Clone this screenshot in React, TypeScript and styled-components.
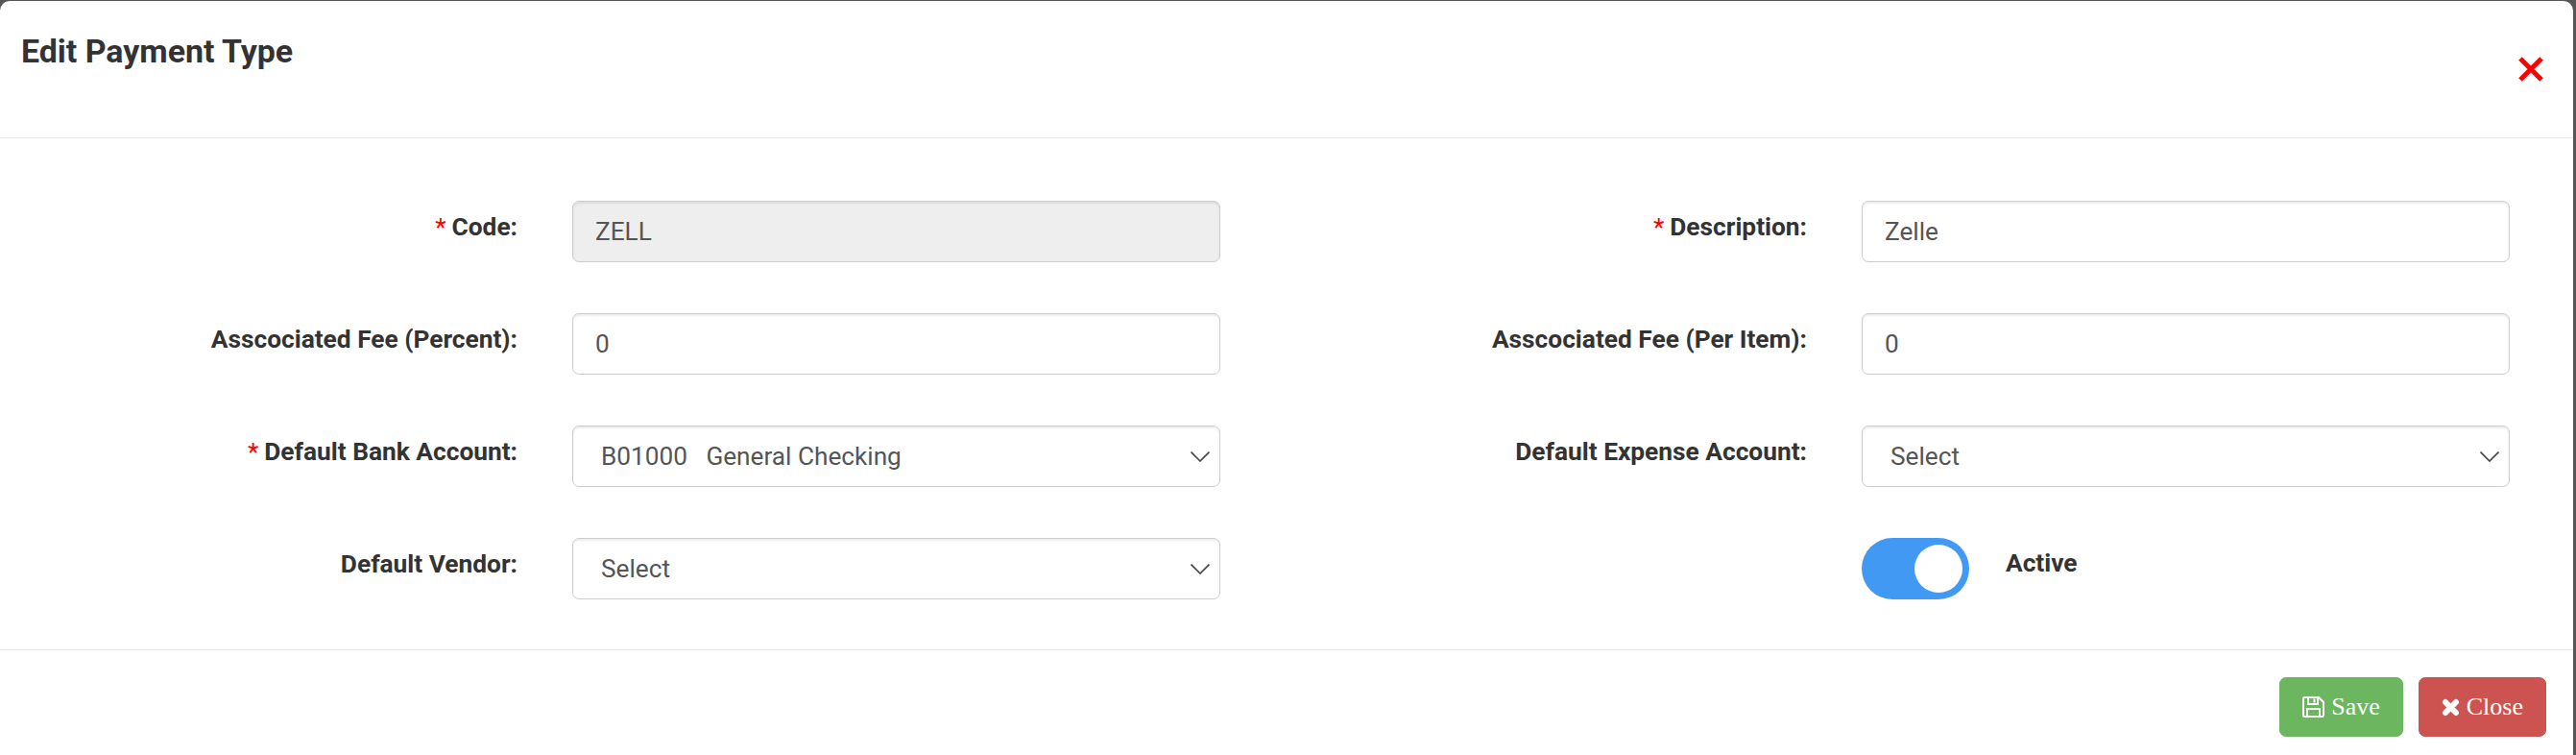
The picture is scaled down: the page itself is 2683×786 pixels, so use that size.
import React from 'react';
import styled, { createGlobalStyle } from 'styled-components';

const GlobalStyle = createGlobalStyle`
  html, body {
    margin: 0;
    padding: 0;
    height: 100%;
    background: #565656;
    overflow: hidden;
  }
  body {
    font-family: Roboto, "Liberation Sans", sans-serif;
    color: #333;
    padding-top: 1px;
    box-sizing: border-box;
  }
`;

const Modal = styled.div`
  box-sizing: border-box;
  width: 2680px;
  height: 785px;
  background: #fff;
  border-radius: 10px 10px 0 0;
  display: flex;
  flex-direction: column;
`;

const Header = styled.div`
  box-sizing: border-box;
  height: 143px;
  border-bottom: 1px solid #e5e5e5;
  padding: 0 31px 0 22px;
  display: flex;
  justify-content: space-between;
`;

const Title = styled.h4`
  margin: 33px 0 0;
  font-size: 33.9px;
  line-height: 40px;
  font-weight: 700;
  color: #333;
`;

const Dismiss = styled.button`
  border: 0;
  background: none;
  padding: 0;
  margin-top: 58px;
  width: 26px;
  height: 26px;
  color: #f00;
  display: block;
`;

const Form = styled.div`
  box-sizing: border-box;
  height: 533px;
  padding-top: 65px;
  border-bottom: 1px solid #e5e5e5;
  display: grid;
  grid-template-columns: 1271px 1343px;
  grid-auto-rows: 64px;
  row-gap: 53px;
`;

const Field = styled.div`
  display: grid;
  grid-template-columns: 1fr 675px;
  column-gap: 57px;
`;

const Label = styled.label`
  text-align: right;
  font-size: 26.3px;
  font-weight: 700;
  line-height: 28px;
  padding-top: 13px;
  color: #333;
`;

const Required = styled.span`
  color: #f00;
  font-weight: 400;
  margin-right: 6px;
`;

const Input = styled.input<{ $locked?: boolean }>`
  box-sizing: border-box;
  width: 100%;
  height: 64px;
  padding: 0 23px;
  font-family: inherit;
  font-size: 26.2px;
  color: #555;
  background: ${(props) => (props.$locked ? '#eee' : '#fff')};
  border: 1px solid #ccc;
  border-radius: 7px;
  box-shadow: inset 0 2px 2px rgba(0, 0, 0, 0.075);
  outline: none;
`;

const SelectWrap = styled.div`
  position: relative;
  height: 64px;
`;

const Select = styled.select`
  box-sizing: border-box;
  width: 100%;
  height: 64px;
  padding: 0 60px 0 29px;
  appearance: none;
  font-family: inherit;
  font-size: 26.2px;
  color: #555;
  background: #fff;
  border: 1px solid #ccc;
  border-radius: 7px;
  box-shadow: inset 0 2px 2px rgba(0, 0, 0, 0.075);
  outline: none;
`;

const Chevron = styled.svg`
  position: absolute;
  right: 11px;
  top: 27px;
  width: 20px;
  height: 11px;
  pointer-events: none;
`;

const ToggleRow = styled.div`
  display: flex;
  align-items: flex-start;
  gap: 38px;
`;

const Track = styled.div`
  box-sizing: border-box;
  width: 112px;
  height: 64px;
  border-radius: 32px;
  background: #4299f3;
  padding: 7px 7px 7px 55px;
`;

const Knob = styled.div`
  width: 50px;
  height: 50px;
  border-radius: 50%;
  background: #fff;
`;

const ToggleLabel = styled.span`
  font-size: 26.3px;
  font-weight: 700;
  line-height: 28px;
  padding-top: 12px;
  color: #333;
`;

const Footer = styled.div`
  box-sizing: border-box;
  padding: 28px 28px 0 0;
  display: flex;
  justify-content: flex-end;
  gap: 16px;
`;

const Button = styled.button<{ $tone: string }>`
  box-sizing: border-box;
  height: 62px;
  padding: 0 23px;
  display: flex;
  align-items: center;
  gap: 7px;
  font-family: "Liberation Serif", serif;
  font-size: 26px;
  color: #fff;
  background: ${(props) => props.$tone};
  border: 1px solid ${(props) => props.$tone};
  border-radius: 7px;
`;

const ChevronIcon = () => (
  <Chevron viewBox="0 0 20 11">
    <path d="M0.5 0.5 L10 10 L19.5 0.5" fill="none" stroke="#444" strokeWidth="1.6" />
  </Chevron>
);

const FloppyIcon = () => (
  <svg viewBox="0 0 23 22" width="23" height="22" fill="none" stroke="currentColor" strokeWidth="2">
    <path d="M2.5 1 H17 L22 6 V19.5 Q22 21 20.5 21 H2.5 Q1 21 1 19.5 V2.5 Q1 1 2.5 1 Z" />
    <path d="M6 1 V8 H16 V1" />
    <path d="M12.5 2.5 V6.5" />
    <path d="M5 21 V13 H18 V21" />
  </svg>
);

const CrossIcon = () => (
  <svg viewBox="0 0 19 19" width="19" height="19">
    <path d="M4 4 L15 15 M15 4 L4 15" stroke="currentColor" strokeWidth="6" strokeLinecap="round" />
  </svg>
);

const App = () => {
  return (
    <>
      <GlobalStyle />
      <Modal>
        <Header>
          <Title>Edit Payment Type</Title>
          <Dismiss aria-label="Close">
            <svg viewBox="0 0 26 26" width="26" height="26">
              <path d="M2 2 L24 24 M24 2 L2 24" stroke="currentColor" strokeWidth="5" />
            </svg>
          </Dismiss>
        </Header>
        <Form>
          <Field>
            <Label>
              <Required>*</Required>Code:
            </Label>
            <Input $locked readOnly defaultValue="ZELL" />
          </Field>
          <Field>
            <Label>
              <Required>*</Required>Description:
            </Label>
            <Input defaultValue="Zelle" />
          </Field>
          <Field>
            <Label>Asscociated Fee (Percent):</Label>
            <Input defaultValue="0" />
          </Field>
          <Field>
            <Label>Asscociated Fee (Per Item):</Label>
            <Input defaultValue="0" />
          </Field>
          <Field>
            <Label>
              <Required>*</Required>Default Bank Account:
            </Label>
            <SelectWrap>
              <Select defaultValue="B01000">
                <option value="B01000">B01000&nbsp;&nbsp;&nbsp;General Checking</option>
              </Select>
              <ChevronIcon />
            </SelectWrap>
          </Field>
          <Field>
            <Label>Default Expense Account:</Label>
            <SelectWrap>
              <Select>
                <option>Select</option>
              </Select>
              <ChevronIcon />
            </SelectWrap>
          </Field>
          <Field>
            <Label>Default Vendor:</Label>
            <SelectWrap>
              <Select>
                <option>Select</option>
              </Select>
              <ChevronIcon />
            </SelectWrap>
          </Field>
          <Field>
            <span />
            <ToggleRow>
              <Track>
                <Knob />
              </Track>
              <ToggleLabel>Active</ToggleLabel>
            </ToggleRow>
          </Field>
        </Form>
        <Footer>
          <Button $tone="#6cb660">
            <FloppyIcon />
            Save
          </Button>
          <Button $tone="#cd5350">
            <CrossIcon />
            Close
          </Button>
        </Footer>
      </Modal>
    </>
  );
};

export default App;
